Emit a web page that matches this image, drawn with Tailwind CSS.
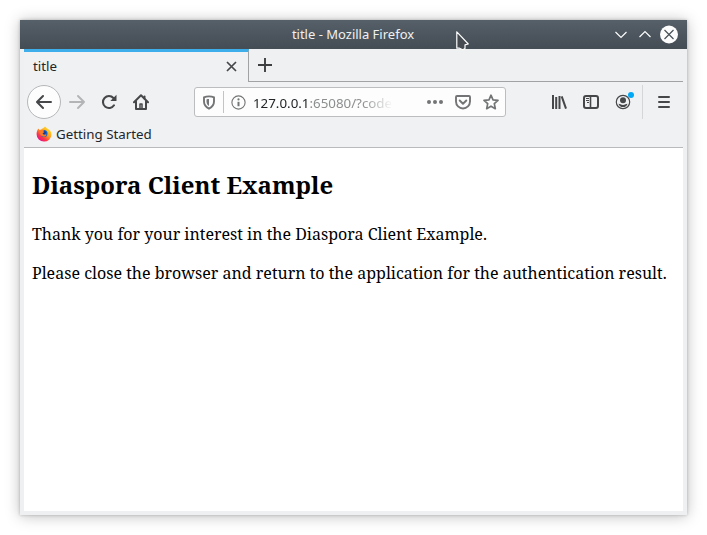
<!DOCTYPE html>
<html lang="en">
<head>
<meta charset="utf-8">
<title>title - Mozilla Firefox</title>
<script src="https://cdn.jsdelivr.net/npm/@tailwindcss/browser@4"></script>
</head>
<body class="h-[535px] w-[707px] overflow-hidden bg-white p-5 font-['Noto_Sans',sans-serif] text-[13px] text-[#232629]">
<div class="relative flex h-[495px] w-[667px] flex-col bg-[#eff0f1] shadow-[0_1px_14px_rgba(0,0,0,0.26),0_0_3px_rgba(0,0,0,0.22)]">
  <!-- Window title bar -->
  <header class="flex h-[29px] shrink-0 items-center bg-linear-to-b from-[#566068] to-[#444c54] text-[#eff0f1]">
    <div class="w-[586px] pl-[80px] text-center leading-[29px]">title - Mozilla Firefox</div>
    <svg class="h-6 w-[81px]" viewBox="0 0 81 24" fill="none">
      <path d="M9.5 9 15 14.500l5.500-5.500M33.500 14 39 8.500l5.500 5.500" stroke="#fcfcfc" stroke-width="1.200"/>
      <circle cx="63" cy="11.500" r="9" fill="#fcfcfc"/>
      <path d="m58.500 7 9 9m0-9-9 9" stroke="#475057" stroke-width="1.200"/>
    </svg>
  </header>

  <div class="mx-1 flex min-h-0 flex-1 flex-col">
    <!-- Tabs -->
    <div class="flex h-[33px] shrink-0">
      <div class="flex w-[225px] items-center justify-between border-t-3 border-r border-t-[#3daee9] border-r-[#a0a2a4] bg-[#f0f1f3] pr-[11px] pb-[2px] pl-[9px] text-[13.33px]">
        <span class="leading-[28px]">title</span>
        <svg class="h-[11px] w-[11px]" viewBox="0 0 11 11"><path d="m1 1 9 9m0-9-9 9" stroke="#454749" stroke-width="1.700"/></svg>
      </div>
      <div class="flex flex-1 items-center border-b border-[#a0a2a4] pl-[9px]">
        <svg class="h-[14px] w-[14px]" viewBox="0 0 14 14"><path d="M7 0v14M0 7h14" stroke="#3c3e40" stroke-width="1.900"/></svg>
      </div>
    </div>

    <!-- Navigation toolbar -->
    <nav class="flex h-[40px] shrink-0 items-center bg-[#f0f1f3] pl-[3px] text-[#454749]">
      <div class="flex h-[34px] w-[34px] items-center justify-center rounded-full border border-[#b5b7b9] bg-[#fcfdfc]">
        <svg class="h-4 w-4" viewBox="0 0 16 16" fill="none" stroke="currentColor" stroke-width="2" stroke-linecap="round" stroke-linejoin="round"><path d="M15 8H1.500M7 2 1 8l6 6"/></svg>
      </div>
      <div class="flex w-8 justify-center text-[#b3b4b6]">
        <svg class="h-4 w-4" viewBox="0 0 16 16" fill="none" stroke="currentColor" stroke-width="1.900" stroke-linecap="round" stroke-linejoin="round"><path d="M1 8h13.500M9 2l6 6-6 6"/></svg>
      </div>
      <div class="flex w-8 justify-center">
        <svg class="h-4 w-4" viewBox="0 0 16 16"><path d="M12.400 4A6 6 0 1 0 13 11.300" fill="none" stroke="currentColor" stroke-width="2.100" stroke-linecap="round"/><path d="M15.500.8v5.700a.5.500 0 0 1-.5.500H9.300z" fill="currentColor"/></svg>
      </div>
      <div class="flex w-8 justify-center">
        <svg class="h-4 w-4" viewBox="0 0 16 16" fill="none" stroke="currentColor" stroke-width="2" stroke-linecap="round" stroke-linejoin="round"><path d="M1 8.300 8 1.200l7 7.100"/><path d="M3 7.500V15h10V7.500"/><path d="M7 14v-4h2v4" stroke-width="1.500"/><path d="M11.500 2.500v2"/></svg>
      </div>

      <div class="ml-[37px] flex h-[30px] w-[312px] items-center rounded-[3px] border border-[#bbbdbf] bg-[#fcfdfc] text-[#737476]">
        <div class="flex w-7 justify-center">
          <svg class="h-[15px] w-[14px]" viewBox="0 0 14 15"><path d="M7 1.400c1.800 0 3.600.3 5 1v4.200c0 3.400-2 5.600-5 7-3-1.400-5-3.600-5-7V2.400c1.400-.7 3.200-1 5-1z" fill="none" stroke="currentColor" stroke-width="1.900"/><path d="M7 4c-.9 0-1.800.1-2.500.4v2.400c0 1.900.9 3.200 2.500 4.200z" fill="currentColor"/></svg>
        </div>
        <div class="h-[22px] w-px bg-[#c3c4c5]"></div>
        <div class="flex w-7 justify-center">
          <svg class="h-[15px] w-[15px]" viewBox="0 0 15 15"><circle cx="7.500" cy="7.500" r="6.600" fill="none" stroke="currentColor" stroke-width="1.100"/><circle cx="7.500" cy="4.400" r="1.100" fill="currentColor"/><path d="M7.500 6.800v4.400" stroke="currentColor" stroke-width="2"/></svg>
        </div>
        <div class="ml-px w-[140px] pt-[4px] mask-r-from-78% whitespace-nowrap text-[13.33px] text-[#8c8e8f]"><span class="text-[#232629]">127.0.0.1</span>:65080/?code</div>
        <div class="ml-[28px] flex w-7 justify-center">
          <svg class="h-4 w-4" viewBox="0 0 16 16" fill="currentColor"><circle cx="2" cy="8" r="2"/><circle cx="8" cy="8" r="2"/><circle cx="14" cy="8" r="2"/></svg>
        </div>
        <div class="flex w-7 justify-center">
          <svg class="h-4 w-4" viewBox="0 0 16 16" fill="none" stroke="currentColor" stroke-width="1.900" stroke-linecap="round" stroke-linejoin="round"><path d="M2 2h12q1 0 1 1v4.500a7 7 0 0 1-14 0V3q0-1 1-1z"/><path d="m4.700 6.500 3.300 3.200 3.300-3.200"/></svg>
        </div>
        <div class="flex w-7 justify-center">
          <svg class="h-4 w-4" viewBox="0 0 16 16" fill="none" stroke="currentColor" stroke-width="1.700" stroke-linejoin="round"><path d="m8 1.200 2 4.600 5 .5-3.700 3.400 1 5L8 12.200l-4.300 2.500 1-5L1 6.300l5-.5z"/></svg>
        </div>
      </div>

      <div class="ml-[37px] flex w-8 justify-center">
        <svg class="h-4 w-4" viewBox="0 0 16 16" fill="none" stroke="currentColor" stroke-width="2"><path d="M2 1v14M5.200 3v12M8.500 2v13M10.700 2.300 15 14.700"/></svg>
      </div>
      <div class="flex w-8 justify-center">
        <svg class="h-4 w-4" viewBox="0 0 16 16" fill="none" stroke="currentColor"><rect x="1" y="2" width="14" height="12" rx="2" stroke-width="2"/><path d="M7.500 2v12" stroke-width="1.600"/><path d="M3 4.500h3M3 6.500h3M4 8.500h2" stroke-width="1"/></svg>
      </div>
      <div class="relative flex w-8 justify-center">
        <svg class="h-4 w-4" viewBox="0 0 16 16"><circle cx="8" cy="8" r="6.700" fill="none" stroke="currentColor" stroke-width="1.200"/><circle cx="8" cy="6.200" r="3" fill="currentColor"/><path d="M3.500 9.700q1.200 0 2 .6 2.500 1.200 5 0 .8-.6 2-.6-1 3.400-4.500 3.400t-4.500-3.400z" fill="currentColor"/></svg>
        <span class="absolute top-[-2px] right-[5px] h-[6px] w-[6px] rounded-full bg-[#00a8f8]"></span>
      </div>
      <div class="ml-[3px] h-[34px] w-px bg-[#d5d6d8]"></div>
      <div class="ml-[5px] flex w-8 justify-center">
        <svg class="h-4 w-4" viewBox="0 0 16 16" stroke="currentColor" stroke-width="2" stroke-linecap="round"><path d="M3 3h10M3 8h10M3 13h10"/></svg>
      </div>
    </nav>

    <!-- Bookmarks toolbar -->
    <div class="flex h-[26px] shrink-0 items-center gap-1 border-b border-[#b8babc] bg-[#f0f1f3] pb-px pl-3 text-[13.33px]">
      <svg class="h-4 w-4" viewBox="0 0 16 16">
        <defs><linearGradient id="flame" x1=".85" y1=".1" x2=".2" y2=".9"><stop offset="0" stop-color="#ffe226"/><stop offset=".45" stop-color="#ff9a1f"/><stop offset=".75" stop-color="#ff3647"/><stop offset="1" stop-color="#e31587"/></linearGradient></defs>
        <path d="M9 .5c1 .5 1.500 1.200 2 2 2.500 1 4.600 3.100 4.500 6.200A7.300 7.300 0 0 1 8 15.600 7.300 7.300 0 0 1 .6 8.300C.6 6 1.300 4 2.300 2.600L3.500 4l1.800-.5C6 2 8 2.500 9 .5z" fill="url(#flame)"/>
        <circle cx="8" cy="7.600" r="3.500" fill="#1b63c6"/>
        <path d="M4 4.500Q6 3.200 8 4.500L7.300 5.700 8.300 6.300 6.600 7.600Q7 9 9 8.500q1-.3 1.600.2-1 2.300-3.300 1.900Q4 10 3.600 6.500z" fill="#ff7a24"/>
        <path d="M8 4.500q2 .5 2 2.500L8.300 8.500 6.700 7.500 8.500 6z" fill="#173b8f"/>
      </svg>
      <span class="pt-[2px]">Getting Started</span>
    </div>

    <!-- Page -->
    <main class="mb-1 flex-1 bg-white px-2 font-['Noto_Serif','Droid_Serif','DejaVu_Serif_Condensed','DejaVu_Serif',serif] text-black">
      <h2 class="mt-[20px] text-[24px] leading-[33px] font-bold whitespace-nowrap">Diaspora Client Example</h2>
      <p class="mt-[22px] text-[16px] leading-[22px] whitespace-nowrap">Thank you for your interest in the Diaspora Client Example.</p>
      <p class="mt-[17px] text-[16px] leading-[22px] whitespace-nowrap">Please close the browser and return to the application for the authentication result.</p>
    </main>
  </div>

  <!-- Mouse pointer -->
  <svg class="absolute top-[10px] left-[435px] h-[24px] w-[16px]" viewBox="0 0 16 24"><path d="M1.800 1.800v16.400h2.700l3.300 1.500 2.200-1.200v-3.700L13.300 14z" fill="#454b50" stroke="#fff" stroke-width="1.200" stroke-linejoin="round"/></svg>
</div>
</body>
</html>
